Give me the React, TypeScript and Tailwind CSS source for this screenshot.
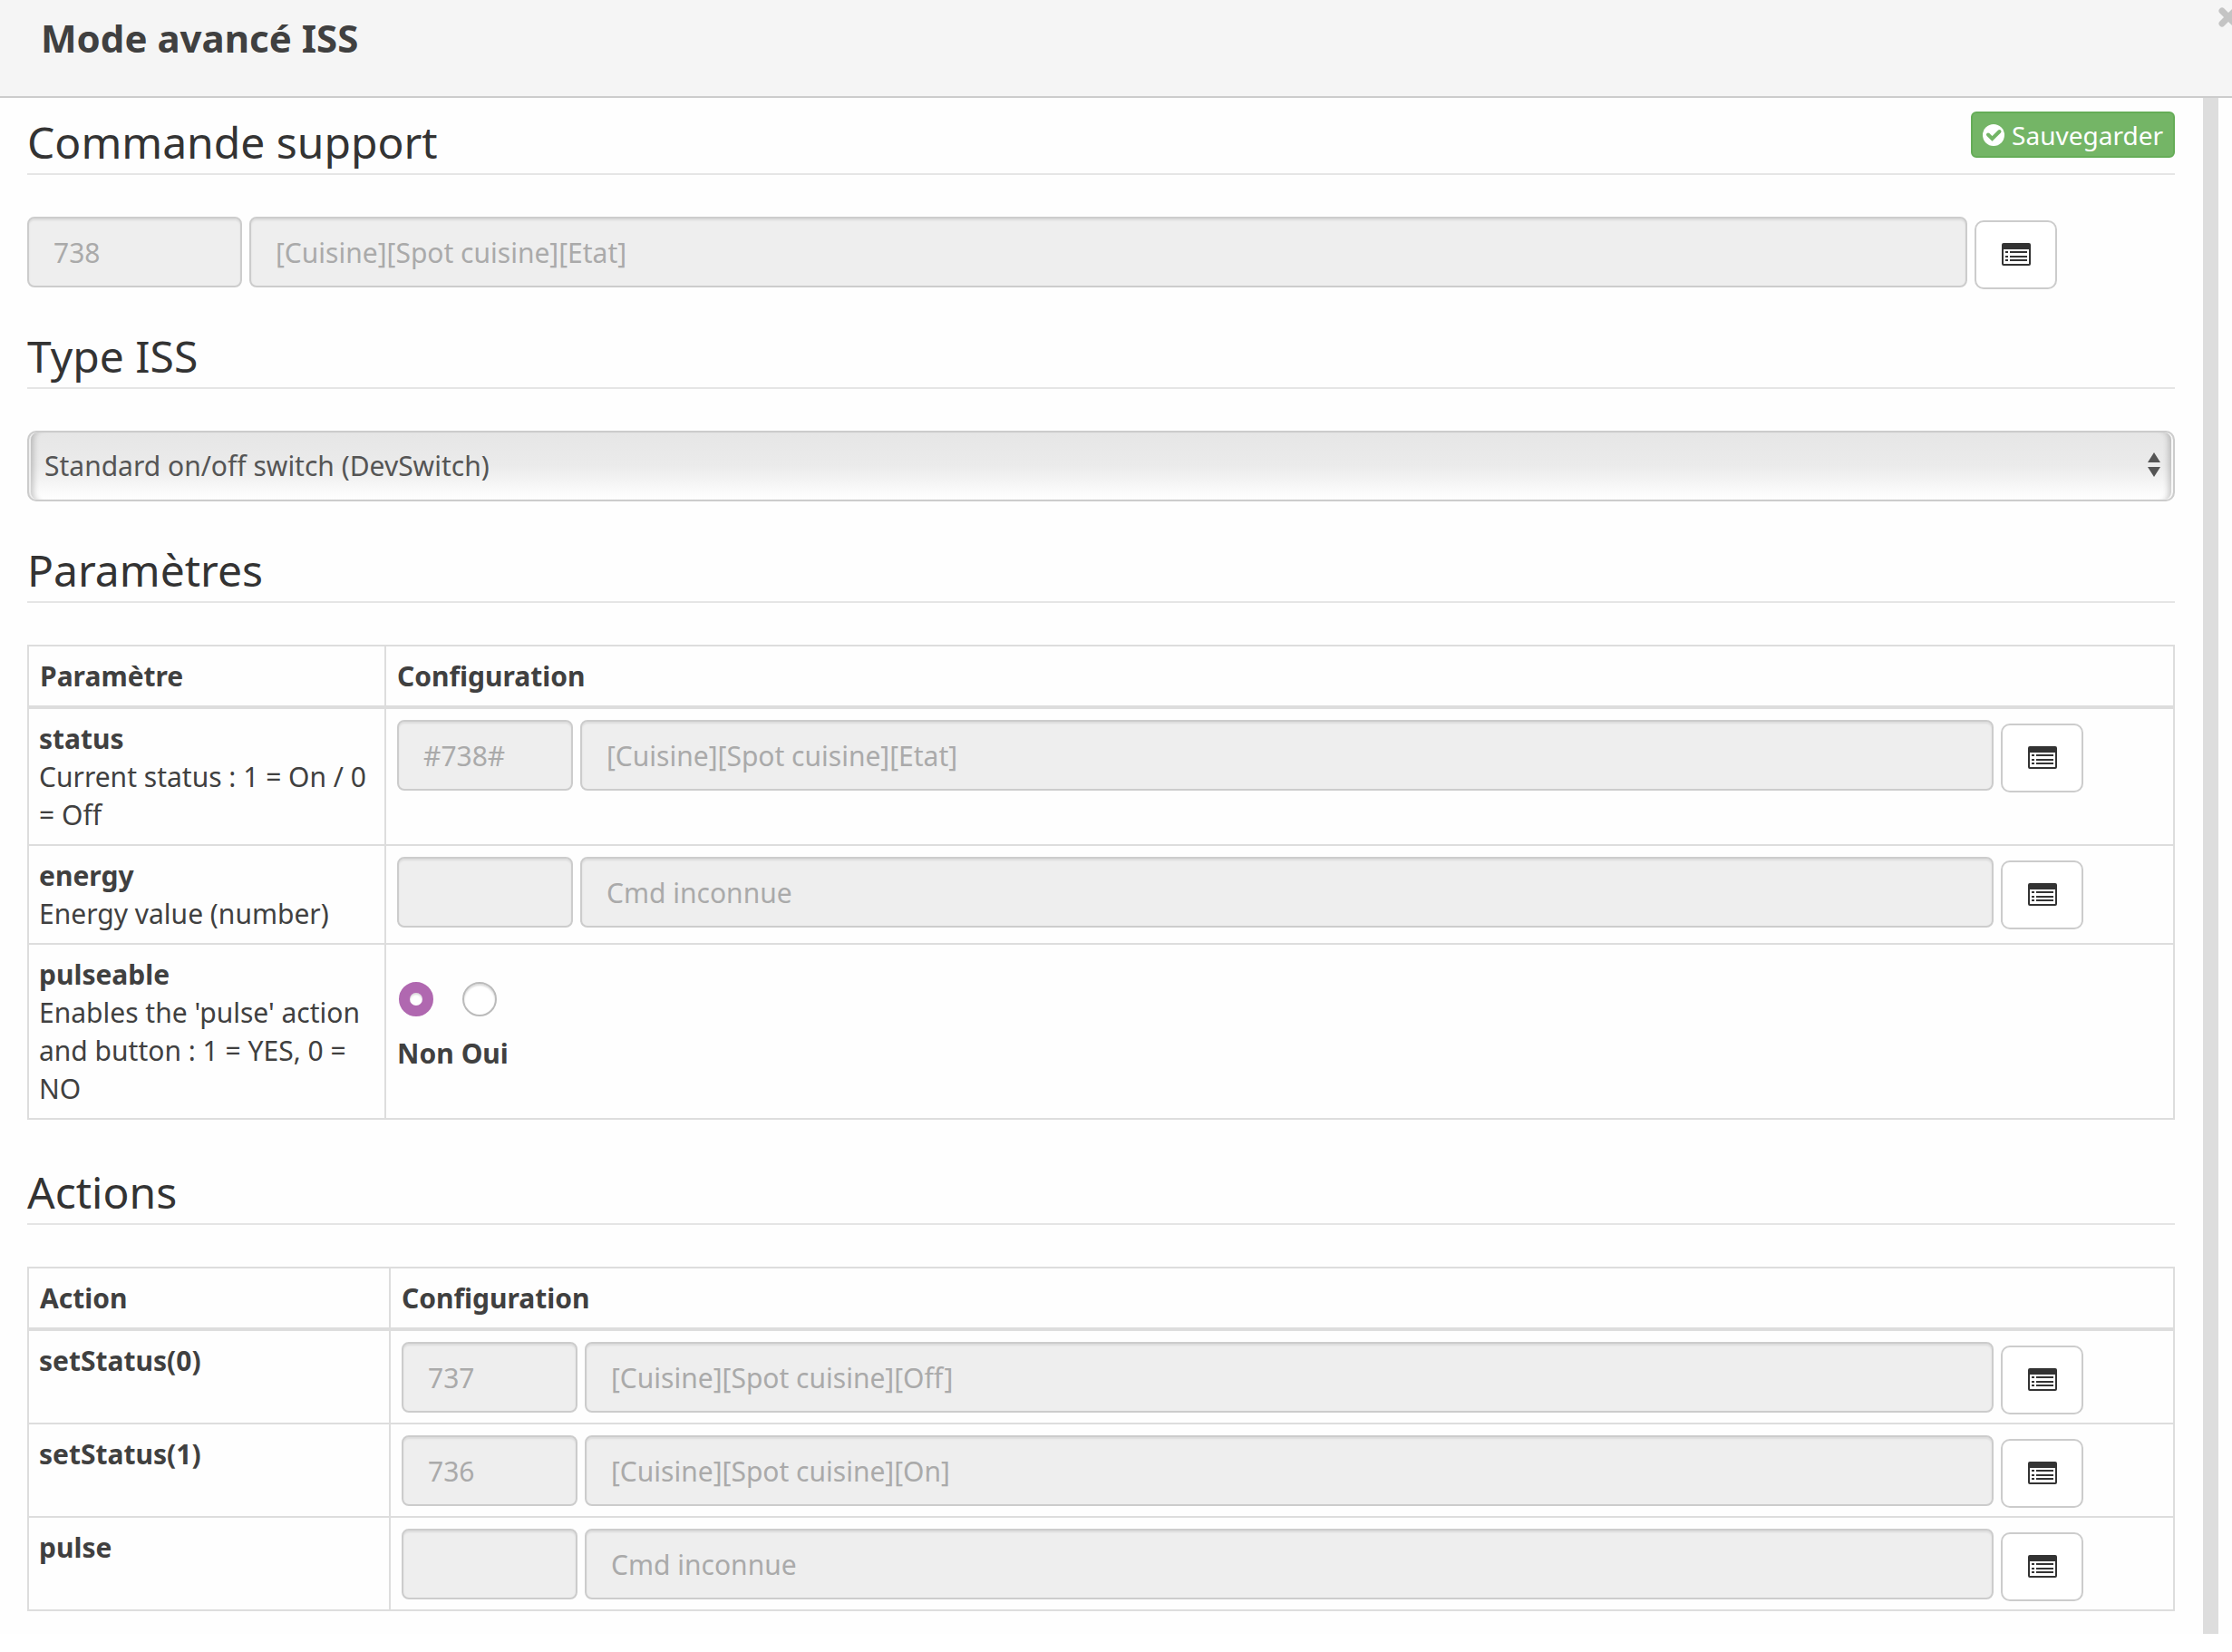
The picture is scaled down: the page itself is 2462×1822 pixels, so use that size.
import { useState } from "react";

type Command = { id: string; label: string };

const parameters = [
  {
    name: "status",
    description: "Current status : 1 = On / 0 = Off",
    command: { id: "#738#", label: "[Cuisine][Spot cuisine][Etat]" },
  },
  {
    name: "energy",
    description: "Energy value (number)",
    command: { id: "", label: "Cmd inconnue" },
  },
];

const actions = [
  { name: "setStatus(0)", command: { id: "737", label: "[Cuisine][Spot cuisine][Off]" } },
  { name: "setStatus(1)", command: { id: "736", label: "[Cuisine][Spot cuisine][On]" } },
  { name: "pulse", command: { id: "", label: "Cmd inconnue" } },
];

const pulseOptions = ["Non", "Oui"];

const cell = "border-2 border-[#ddd] pt-3 pb-[11px] pr-3 align-top";
const firstCell = cell + " pl-[11px]";
const headCell = cell + " pl-3 border-b-4 text-left font-bold";

const ListIcon = () => (
  <svg width="32" height="26" viewBox="0 0 32 26" fill="#333" aria-hidden="true">
    <path
      fillRule="evenodd"
      d="M2 0h28a2 2 0 0 1 2 2v21a2 2 0 0 1-2 2H2a2 2 0 0 1-2-2V2a2 2 0 0 1 2-2zM2 7v16h28V7z"
    />
    <path d="M4 9h3v2H4zM9 9h19v2H9zM4 14h3v2H4zM9 14h19v2H9zM4 18h3v2H4zM9 18h19v2H9z" />
  </svg>
);

const CommandField = ({
  name,
  command,
  idWidth,
}: {
  name: string;
  command: Command;
  idWidth: string;
}) => {
  const field =
    "h-[78px] min-w-0 rounded-lg border-2 border-[#ccc] bg-[#eee] px-[27px] text-[#aaa] shadow-[inset_0_2px_2px_rgba(0,0,0,0.075)]";

  return (
    <div className="flex h-[78px] items-start gap-2">
      <input className={field + " " + idWidth} aria-label={name + " id"} value={command.id} disabled readOnly />
      <input className={field + " flex-1"} aria-label={name} value={command.label} disabled readOnly />
      <button
        type="button"
        aria-label={"Choisir " + name}
        className="mt-1 flex h-[76px] w-[91px] shrink-0 items-center justify-center rounded-[10px] border-2 border-[#ccc] bg-white"
      >
        <ListIcon />
      </button>
    </div>
  );
};

const SectionTitle = ({ title, children }: { title: string; children?: React.ReactNode }) => (
  <div className="mb-[46px] flex items-start justify-between border-b-2 border-[#e5e5e5]">
    <h2 className="pt-[15px] text-[48px] leading-[68px] text-[#333]">{title}</h2>
    {children}
  </div>
);

const App = () => {
  const [type, setType] = useState("DevSwitch");
  const [pulseable, setPulseable] = useState("Non");

  return (
    <div className="bg-[#fefefe] font-['Noto_Sans',sans-serif] text-[30px] leading-[42px] text-[#404040]">
      {/* Header */}
      <header className="flex h-[108px] items-start justify-between overflow-hidden border-b-2 border-[#ccc] bg-[#f5f5f5]">
        <h1 className="pt-[13px] pl-[45px] text-[42px] leading-[58px] font-bold">Mode avancé ISS</h1>
        <button type="button" aria-label="Fermer" className="-mr-[7px] mt-2 shrink-0">
          <svg
            width="22"
            height="22"
            viewBox="0 0 22 22"
            stroke="#c4c4c4"
            strokeWidth="7"
            strokeLinecap="round"
            aria-hidden="true"
          >
            <path d="M4 4l14 14M18 4L4 18" />
          </svg>
        </button>
      </header>

      <div className="flex pr-[15px]">
        <main className="min-w-0 flex-1 pr-[31px] pb-[25px] pl-[30px]">
          {/* Support command */}
          <SectionTitle title="Commande support">
            <button
              type="button"
              className="mt-[15px] flex h-[51px] items-center gap-2 rounded-md border-2 border-[#65ad57] bg-[#74b566] px-[11px] text-[28px] text-white"
            >
              <svg width="24" height="24" viewBox="0 0 24 24" aria-hidden="true">
                <circle cx="12" cy="12" r="12" fill="#fff" />
                <path
                  d="M6 11.5l4.500 4.500 8-8"
                  fill="none"
                  stroke="#74b566"
                  strokeWidth="4"
                  strokeLinecap="round"
                />
              </svg>
              Sauvegarder
            </button>
          </SectionTitle>
          <div className="pr-[130px]">
            <CommandField
              name="Commande support"
              command={{ id: "738", label: "[Cuisine][Spot cuisine][Etat]" }}
              idWidth="w-[237px]"
            />
          </div>

          {/* ISS type */}
          <section className="pt-[27px]">
            <SectionTitle title="Type ISS" />
            <div className="relative">
              <select
                aria-label="Type ISS"
                className="h-[78px] w-full appearance-none rounded-[10px] border-2 border-[#ccc] bg-linear-to-b from-[#e6e6e6] via-[#ebebeb] to-white px-[17px] text-[#555] shadow-[inset_2px_0_0_#eee,inset_-2px_0_0_#f8f8f8,inset_10px_0_6px_-5px_rgba(0,0,0,0.2),inset_-10px_0_6px_-5px_rgba(0,0,0,0.2)]"
                value={type}
                onChange={(e) => setType(e.target.value)}
              >
                <option value="DevSwitch">Standard on/off switch (DevSwitch)</option>
              </select>
              <svg
                className="pointer-events-none absolute top-6 right-4"
                width="14"
                height="28"
                viewBox="0 0 14 28"
                fill="#555"
                aria-hidden="true"
              >
                <path d="M7 0l7 11H0zM7 27l7-11H0z" />
              </svg>
            </div>
          </section>

          {/* Parameters */}
          <section className="pt-[27px]">
            <SectionTitle title="Paramètres" />
            <table className="w-full table-fixed border-collapse">
              <colgroup>
                <col className="w-[394px]" />
                <col />
              </colgroup>
              <thead>
                <tr>
                  <th className={headCell}>Paramètre</th>
                  <th className={headCell}>Configuration</th>
                </tr>
              </thead>
              <tbody>
                {parameters.map((parameter) => (
                  <tr key={parameter.name}>
                    <td className={firstCell}>
                      <b>{parameter.name}</b>
                      <br />
                      {parameter.description}
                    </td>
                    <td className={cell + " pl-3"}>
                      <div className="pr-[87px]">
                        <CommandField name={parameter.name} command={parameter.command} idWidth="w-[194px]" />
                      </div>
                    </td>
                  </tr>
                ))}
                <tr>
                  <td className={firstCell}>
                    <b>pulseable</b>
                    <br />
                    Enables the 'pulse' action and button : 1 = YES, 0 = NO
                  </td>
                  <td className={cell + " pl-3"}>
                    <div className="flex gap-8 px-[2px] pt-[29px] pb-5">
                      {pulseOptions.map((option) => (
                        <input
                          key={option}
                          id={"pulse-" + option}
                          type="radio"
                          name="pulseable"
                          className="size-[38px] appearance-none rounded-full border-2 border-[#bbb] bg-white shadow-[inset_0_2px_2px_rgba(0,0,0,0.15)] checked:border-[12px] checked:border-[#b068b0]"
                          checked={pulseable === option}
                          onChange={() => setPulseable(option)}
                        />
                      ))}
                    </div>
                    <div className="flex gap-2 font-bold">
                      {pulseOptions.map((option) => (
                        <label key={option} htmlFor={"pulse-" + option}>
                          {option}
                        </label>
                      ))}
                    </div>
                  </td>
                </tr>
              </tbody>
            </table>
          </section>

          {/* Actions */}
          <section className="pt-[31px]">
            <SectionTitle title="Actions" />
            <table className="w-full table-fixed border-collapse">
              <colgroup>
                <col className="w-[399px]" />
                <col />
              </colgroup>
              <thead>
                <tr>
                  <th className={headCell}>Action</th>
                  <th className={headCell}>Configuration</th>
                </tr>
              </thead>
              <tbody>
                {actions.map((action) => (
                  <tr key={action.name}>
                    <td className={firstCell}>
                      <b>{action.name}</b>
                    </td>
                    <td className={cell + " pl-3"}>
                      <div className="pr-[87px]">
                        <CommandField name={action.name} command={action.command} idWidth="w-[194px]" />
                      </div>
                    </td>
                  </tr>
                ))}
              </tbody>
            </table>
          </section>
        </main>

        {/* Scrollbar track */}
        <div className="w-[17px] bg-[#ddd]" />
      </div>
    </div>
  );
};

export default App;
